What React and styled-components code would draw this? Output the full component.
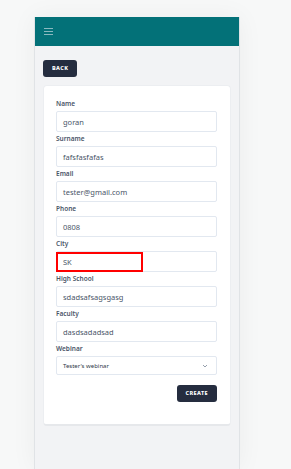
import React from "react";
import styled, { createGlobalStyle } from "styled-components";

const GlobalStyle = createGlobalStyle`
  html, body {
    margin: 0;
    padding: 0;
    background: #f7f8f8;
    font-family: "Noto Sans", "Open Sans", sans-serif;
  }
`;

const Page = styled.div`
  height: 100vh;
  padding-top: 17px;
  box-sizing: border-box;
  overflow: hidden;
`;

const Frame = styled.div`
  margin-left: 34px;
  width: 206px;
  height: 100%;
  background: #f2f3f5;
  border-left: 1px solid #e0e3e6;
  border-right: 1px solid #e0e3e6;
  box-shadow: 0 0 24px rgba(0, 0, 0, 0.05);
  box-sizing: border-box;
`;

const Header = styled.div`
  height: 29px;
  background: #037178;
  display: flex;
  align-items: center;
  padding-left: 9px;
`;

const Burger = styled.div`
  display: flex;
  flex-direction: column;
  gap: 2px;
  span {
    display: block;
    width: 9px;
    height: 1.3px;
    background: #8ab9bf;
  }
`;

const Content = styled.div`
  display: flex;
  flex-direction: column;
  align-items: flex-start;
  padding: 14px 8px 0 8px;
`;

const DarkButton = styled.button`
  display: block;
  border: none;
  background: #252d3f;
  color: #fff;
  font-family: "Noto Sans", sans-serif;
  font-weight: 800;
  font-size: 5.5px;
  line-height: 17px;
  letter-spacing: 0.4px;
  border-radius: 3px;
  height: 17px;
  padding: 0 ${(p) => p.$pad || 8}px;
  cursor: pointer;
`;

const Card = styled.div`
  align-self: stretch;
  margin-top: 8px;
  background: #fff;
  border-radius: 4px;
  border: 1px solid #eceef1;
  border-bottom: 2px solid #e6e8eb;
  padding: 13px 13px 22px 12px;
`;

const Field = styled.div`
  position: relative;
  margin-bottom: ${(p) => p.$mb ?? 2}px;
`;

const Label = styled.label`
  display: block;
  font-size: 6.5px;
  font-weight: 600;
  color: #4a5568;
  line-height: 10px;
  margin-bottom: 2px;
`;

const Input = styled.div`
  height: 21px;
  box-sizing: border-box;
  border: 1px solid #e2e8f0;
  border-radius: 2px;
  display: flex;
  align-items: center;
  padding-left: 6px;
  font-size: 7.5px;
  color: #4a5568;
`;

const Select = styled(Input)`
  height: 19px;
  font-size: 6px;
  justify-content: space-between;
  padding-right: 8px;
  color: #2d3748;
`;

const Highlight = styled.div`
  position: absolute;
  left: 0;
  bottom: 0;
  width: 87px;
  height: 20px;
  border: 2.5px solid #ff0000;
  box-sizing: border-box;
`;

const Actions = styled.div`
  display: flex;
  justify-content: flex-end;
  margin-top: 10px;
`;

const fields = [
  ["Name", "goran"],
  ["Surname", "fafsfasfafas"],
  ["Email", "tester@gmail.com"],
  ["Phone", "0808"],
  ["City", "SK"],
  ["High School", "sdadsafsagsgasg"],
  ["Faculty", "dasdsadadsad"],
];

const App = () => {
  return (
    <>
      <GlobalStyle />
      <Page>
        <Frame>
          <Header>
            <Burger>
              <span />
              <span />
              <span />
            </Burger>
          </Header>
          <Content>
            <DarkButton $pad={9}>BACK</DarkButton>
            <Card>
              {fields.map(([label, value]) => (
                <Field key={label}>
                  <Label>{label}</Label>
                  <Input>{value}</Input>
                  {label === "City" && <Highlight />}
                </Field>
              ))}
              <Field $mb={0}>
                <Label>Webinar</Label>
                <Select>
                  Tester's webinar
                  <svg width="6" height="4" viewBox="0 0 6 4">
                    <path d="M1 1 L3 3 L5 1" fill="none" stroke="#8a94a3" strokeWidth="0.9" />
                  </svg>
                </Select>
              </Field>
              <Actions>
                <DarkButton $pad={9}>CREATE</DarkButton>
              </Actions>
            </Card>
          </Content>
        </Frame>
      </Page>
    </>
  );
};

export default App;
